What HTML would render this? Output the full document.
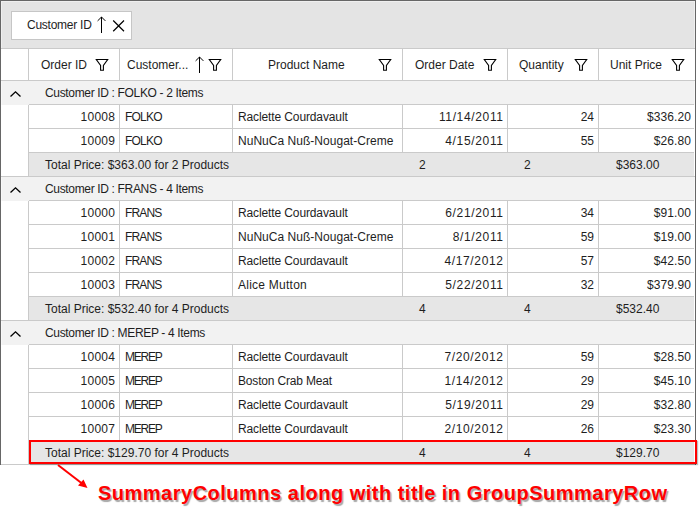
<!DOCTYPE html>
<html><head><meta charset="utf-8"><style>
html,body{margin:0;padding:0;background:#fff;width:699px;height:511px;overflow:hidden;position:relative}
body>div,body>svg{position:absolute}
.t{font-family:"Liberation Sans",sans-serif;font-size:12px;line-height:24px;color:#1e1e1e;white-space:pre}
</style></head><body>
<div style="left:0px;top:0px;width:696px;height:465px;background:#ffffff;border-left:1px solid #666666;border-top:1px solid #666666;border-right:1px solid #666666;box-sizing:border-box;"></div>
<div style="left:1px;top:1px;width:694px;height:47px;background:#efefef;"></div>
<div style="left:2px;top:2px;width:692px;height:46px;background:#e4e4e4;"></div>
<div style="left:1px;top:48px;width:694px;height:1px;background:#cacaca;"></div>
<div style="left:11px;top:11px;width:121px;height:29px;background:#fff;border:1px solid #c6c6c6;box-sizing:border-box;"></div>
<div class="t" style="left:27px;top:12px;letter-spacing:-0.25px;line-height:26px;">Customer ID</div>
<div style="left:28px;top:49px;width:1px;height:31px;background:#cacaca;"></div>
<div style="left:119px;top:49px;width:1px;height:31px;background:#cacaca;"></div>
<div style="left:232px;top:49px;width:1px;height:31px;background:#cacaca;"></div>
<div style="left:402px;top:49px;width:1px;height:31px;background:#cacaca;"></div>
<div style="left:507px;top:49px;width:1px;height:31px;background:#cacaca;"></div>
<div style="left:598px;top:49px;width:1px;height:31px;background:#cacaca;"></div>
<div style="left:1px;top:80px;width:694px;height:1px;background:#cacaca;"></div>
<div class="t" style="left:41px;top:52px;line-height:26px;">Order ID</div>
<div class="t" style="left:127px;top:52px;line-height:26px;">Customer...</div>
<div class="t" style="left:268px;top:52px;line-height:26px;">Product Name</div>
<div class="t" style="left:415px;top:52px;line-height:26px;">Order Date</div>
<div class="t" style="left:519px;top:52px;line-height:26px;">Quantity</div>
<div class="t" style="left:610px;top:52px;line-height:26px;">Unit Price</div>
<div style="left:1px;top:81px;width:694px;height:24px;background:#f8f8f8;"></div>
<div style="left:2px;top:81px;width:692px;height:24px;background:#f2f2f2;"></div>
<div style="left:29px;top:104px;width:665px;height:1px;background:#cacaca;"></div>
<div class="t" style="left:45px;top:81px;letter-spacing:-0.34px;">Customer ID : FOLKO - 2 Items</div>
<svg style="left:8px;top:89px" width="16" height="10"><path d="M2.5 7.4 L7.5 2.8 L12.5 7.4" fill="none" stroke="#000000" stroke-width="1.35"/></svg>
<div style="left:28px;top:105px;width:1px;height:24px;background:#cacaca;"></div>
<div style="left:119px;top:105px;width:1px;height:24px;background:#cacaca;"></div>
<div style="left:232px;top:105px;width:1px;height:24px;background:#cacaca;"></div>
<div style="left:402px;top:105px;width:1px;height:24px;background:#cacaca;"></div>
<div style="left:507px;top:105px;width:1px;height:24px;background:#cacaca;"></div>
<div style="left:598px;top:105px;width:1px;height:24px;background:#cacaca;"></div>
<div style="left:29px;top:128px;width:665px;height:1px;background:#cacaca;"></div>
<div class="t" style="right:583.70px;top:105px;text-align:right;letter-spacing:0.3px;">10008</div>
<div class="t" style="left:125px;top:105px;letter-spacing:-0.8px;">FOLKO</div>
<div class="t" style="left:238px;top:105px;letter-spacing:-0.12px;">Raclette Courdavault</div>
<div class="t" style="right:195.35px;top:105px;text-align:right;letter-spacing:0.65px;">11/14/2011</div>
<div class="t" style="right:105.00px;top:105px;text-align:right;">24</div>
<div class="t" style="right:7.88px;top:105px;text-align:right;letter-spacing:0.12px;">$336.20</div>
<div style="left:28px;top:129px;width:1px;height:24px;background:#cacaca;"></div>
<div style="left:119px;top:129px;width:1px;height:24px;background:#cacaca;"></div>
<div style="left:232px;top:129px;width:1px;height:24px;background:#cacaca;"></div>
<div style="left:402px;top:129px;width:1px;height:24px;background:#cacaca;"></div>
<div style="left:507px;top:129px;width:1px;height:24px;background:#cacaca;"></div>
<div style="left:598px;top:129px;width:1px;height:24px;background:#cacaca;"></div>
<div style="left:29px;top:152px;width:665px;height:1px;background:#cacaca;"></div>
<div class="t" style="right:583.70px;top:129px;text-align:right;letter-spacing:0.3px;">10009</div>
<div class="t" style="left:125px;top:129px;letter-spacing:-0.8px;">FOLKO</div>
<div class="t" style="left:238px;top:129px;letter-spacing:0.03px;">NuNuCa Nuß-Nougat-Creme</div>
<div class="t" style="right:195.35px;top:129px;text-align:right;letter-spacing:0.65px;">4/15/2011</div>
<div class="t" style="right:105.00px;top:129px;text-align:right;">55</div>
<div class="t" style="right:7.88px;top:129px;text-align:right;letter-spacing:0.12px;">$26.80</div>
<div style="left:28px;top:153px;width:1px;height:24px;background:#cacaca;"></div>
<div style="left:29px;top:153px;width:665px;height:23px;background:#e6e6e6;"></div>
<div style="left:1px;top:176px;width:694px;height:1px;background:#cacaca;"></div>
<div class="t" style="left:45px;top:153px;">Total Price: $363.00 for 2 Products</div>
<div class="t" style="left:419px;top:153px;">2</div>
<div class="t" style="left:524px;top:153px;">2</div>
<div class="t" style="left:616px;top:153px;">$363.00</div>
<div style="left:1px;top:177px;width:694px;height:24px;background:#f8f8f8;"></div>
<div style="left:2px;top:177px;width:692px;height:24px;background:#f2f2f2;"></div>
<div style="left:29px;top:200px;width:665px;height:1px;background:#cacaca;"></div>
<div class="t" style="left:45px;top:177px;letter-spacing:-0.34px;">Customer ID : FRANS - 4 Items</div>
<svg style="left:8px;top:185px" width="16" height="10"><path d="M2.5 7.4 L7.5 2.8 L12.5 7.4" fill="none" stroke="#000000" stroke-width="1.35"/></svg>
<div style="left:28px;top:201px;width:1px;height:24px;background:#cacaca;"></div>
<div style="left:119px;top:201px;width:1px;height:24px;background:#cacaca;"></div>
<div style="left:232px;top:201px;width:1px;height:24px;background:#cacaca;"></div>
<div style="left:402px;top:201px;width:1px;height:24px;background:#cacaca;"></div>
<div style="left:507px;top:201px;width:1px;height:24px;background:#cacaca;"></div>
<div style="left:598px;top:201px;width:1px;height:24px;background:#cacaca;"></div>
<div style="left:29px;top:224px;width:665px;height:1px;background:#cacaca;"></div>
<div class="t" style="right:583.70px;top:201px;text-align:right;letter-spacing:0.3px;">10000</div>
<div class="t" style="left:125px;top:201px;letter-spacing:-0.87px;">FRANS</div>
<div class="t" style="left:238px;top:201px;letter-spacing:-0.12px;">Raclette Courdavault</div>
<div class="t" style="right:195.35px;top:201px;text-align:right;letter-spacing:0.65px;">6/21/2011</div>
<div class="t" style="right:105.00px;top:201px;text-align:right;">34</div>
<div class="t" style="right:7.88px;top:201px;text-align:right;letter-spacing:0.12px;">$91.00</div>
<div style="left:28px;top:225px;width:1px;height:24px;background:#cacaca;"></div>
<div style="left:119px;top:225px;width:1px;height:24px;background:#cacaca;"></div>
<div style="left:232px;top:225px;width:1px;height:24px;background:#cacaca;"></div>
<div style="left:402px;top:225px;width:1px;height:24px;background:#cacaca;"></div>
<div style="left:507px;top:225px;width:1px;height:24px;background:#cacaca;"></div>
<div style="left:598px;top:225px;width:1px;height:24px;background:#cacaca;"></div>
<div style="left:29px;top:248px;width:665px;height:1px;background:#cacaca;"></div>
<div class="t" style="right:583.70px;top:225px;text-align:right;letter-spacing:0.3px;">10001</div>
<div class="t" style="left:125px;top:225px;letter-spacing:-0.87px;">FRANS</div>
<div class="t" style="left:238px;top:225px;letter-spacing:0.03px;">NuNuCa Nuß-Nougat-Creme</div>
<div class="t" style="right:195.35px;top:225px;text-align:right;letter-spacing:0.65px;">8/1/2011</div>
<div class="t" style="right:105.00px;top:225px;text-align:right;">59</div>
<div class="t" style="right:7.88px;top:225px;text-align:right;letter-spacing:0.12px;">$19.00</div>
<div style="left:28px;top:249px;width:1px;height:24px;background:#cacaca;"></div>
<div style="left:119px;top:249px;width:1px;height:24px;background:#cacaca;"></div>
<div style="left:232px;top:249px;width:1px;height:24px;background:#cacaca;"></div>
<div style="left:402px;top:249px;width:1px;height:24px;background:#cacaca;"></div>
<div style="left:507px;top:249px;width:1px;height:24px;background:#cacaca;"></div>
<div style="left:598px;top:249px;width:1px;height:24px;background:#cacaca;"></div>
<div style="left:29px;top:272px;width:665px;height:1px;background:#cacaca;"></div>
<div class="t" style="right:583.70px;top:249px;text-align:right;letter-spacing:0.3px;">10002</div>
<div class="t" style="left:125px;top:249px;letter-spacing:-0.87px;">FRANS</div>
<div class="t" style="left:238px;top:249px;letter-spacing:-0.12px;">Raclette Courdavault</div>
<div class="t" style="right:195.35px;top:249px;text-align:right;letter-spacing:0.65px;">4/17/2012</div>
<div class="t" style="right:105.00px;top:249px;text-align:right;">57</div>
<div class="t" style="right:7.88px;top:249px;text-align:right;letter-spacing:0.12px;">$42.50</div>
<div style="left:28px;top:273px;width:1px;height:24px;background:#cacaca;"></div>
<div style="left:119px;top:273px;width:1px;height:24px;background:#cacaca;"></div>
<div style="left:232px;top:273px;width:1px;height:24px;background:#cacaca;"></div>
<div style="left:402px;top:273px;width:1px;height:24px;background:#cacaca;"></div>
<div style="left:507px;top:273px;width:1px;height:24px;background:#cacaca;"></div>
<div style="left:598px;top:273px;width:1px;height:24px;background:#cacaca;"></div>
<div style="left:29px;top:296px;width:665px;height:1px;background:#cacaca;"></div>
<div class="t" style="right:583.70px;top:273px;text-align:right;letter-spacing:0.3px;">10003</div>
<div class="t" style="left:125px;top:273px;letter-spacing:-0.87px;">FRANS</div>
<div class="t" style="left:238px;top:273px;letter-spacing:0.25px;">Alice Mutton</div>
<div class="t" style="right:195.35px;top:273px;text-align:right;letter-spacing:0.65px;">5/22/2011</div>
<div class="t" style="right:105.00px;top:273px;text-align:right;">32</div>
<div class="t" style="right:7.88px;top:273px;text-align:right;letter-spacing:0.12px;">$379.90</div>
<div style="left:28px;top:297px;width:1px;height:24px;background:#cacaca;"></div>
<div style="left:29px;top:297px;width:665px;height:23px;background:#e6e6e6;"></div>
<div style="left:1px;top:320px;width:694px;height:1px;background:#cacaca;"></div>
<div class="t" style="left:45px;top:297px;">Total Price: $532.40 for 4 Products</div>
<div class="t" style="left:419px;top:297px;">4</div>
<div class="t" style="left:524px;top:297px;">4</div>
<div class="t" style="left:616px;top:297px;">$532.40</div>
<div style="left:1px;top:321px;width:694px;height:24px;background:#f8f8f8;"></div>
<div style="left:2px;top:321px;width:692px;height:24px;background:#f2f2f2;"></div>
<div style="left:29px;top:344px;width:665px;height:1px;background:#cacaca;"></div>
<div class="t" style="left:45px;top:321px;letter-spacing:-0.34px;">Customer ID : MEREP - 4 Items</div>
<svg style="left:8px;top:329px" width="16" height="10"><path d="M2.5 7.4 L7.5 2.8 L12.5 7.4" fill="none" stroke="#000000" stroke-width="1.35"/></svg>
<div style="left:28px;top:345px;width:1px;height:24px;background:#cacaca;"></div>
<div style="left:119px;top:345px;width:1px;height:24px;background:#cacaca;"></div>
<div style="left:232px;top:345px;width:1px;height:24px;background:#cacaca;"></div>
<div style="left:402px;top:345px;width:1px;height:24px;background:#cacaca;"></div>
<div style="left:507px;top:345px;width:1px;height:24px;background:#cacaca;"></div>
<div style="left:598px;top:345px;width:1px;height:24px;background:#cacaca;"></div>
<div style="left:29px;top:368px;width:665px;height:1px;background:#cacaca;"></div>
<div class="t" style="right:583.70px;top:345px;text-align:right;letter-spacing:0.3px;">10004</div>
<div class="t" style="left:125px;top:345px;letter-spacing:-1.25px;">MEREP</div>
<div class="t" style="left:238px;top:345px;letter-spacing:-0.12px;">Raclette Courdavault</div>
<div class="t" style="right:195.35px;top:345px;text-align:right;letter-spacing:0.65px;">7/20/2012</div>
<div class="t" style="right:105.00px;top:345px;text-align:right;">59</div>
<div class="t" style="right:7.88px;top:345px;text-align:right;letter-spacing:0.12px;">$28.50</div>
<div style="left:28px;top:369px;width:1px;height:24px;background:#cacaca;"></div>
<div style="left:119px;top:369px;width:1px;height:24px;background:#cacaca;"></div>
<div style="left:232px;top:369px;width:1px;height:24px;background:#cacaca;"></div>
<div style="left:402px;top:369px;width:1px;height:24px;background:#cacaca;"></div>
<div style="left:507px;top:369px;width:1px;height:24px;background:#cacaca;"></div>
<div style="left:598px;top:369px;width:1px;height:24px;background:#cacaca;"></div>
<div style="left:29px;top:392px;width:665px;height:1px;background:#cacaca;"></div>
<div class="t" style="right:583.70px;top:369px;text-align:right;letter-spacing:0.3px;">10005</div>
<div class="t" style="left:125px;top:369px;letter-spacing:-1.25px;">MEREP</div>
<div class="t" style="left:238px;top:369px;letter-spacing:-0.17px;">Boston Crab Meat</div>
<div class="t" style="right:195.35px;top:369px;text-align:right;letter-spacing:0.65px;">1/14/2012</div>
<div class="t" style="right:105.00px;top:369px;text-align:right;">29</div>
<div class="t" style="right:7.88px;top:369px;text-align:right;letter-spacing:0.12px;">$45.10</div>
<div style="left:28px;top:393px;width:1px;height:24px;background:#cacaca;"></div>
<div style="left:119px;top:393px;width:1px;height:24px;background:#cacaca;"></div>
<div style="left:232px;top:393px;width:1px;height:24px;background:#cacaca;"></div>
<div style="left:402px;top:393px;width:1px;height:24px;background:#cacaca;"></div>
<div style="left:507px;top:393px;width:1px;height:24px;background:#cacaca;"></div>
<div style="left:598px;top:393px;width:1px;height:24px;background:#cacaca;"></div>
<div style="left:29px;top:416px;width:665px;height:1px;background:#cacaca;"></div>
<div class="t" style="right:583.70px;top:393px;text-align:right;letter-spacing:0.3px;">10006</div>
<div class="t" style="left:125px;top:393px;letter-spacing:-1.25px;">MEREP</div>
<div class="t" style="left:238px;top:393px;letter-spacing:-0.12px;">Raclette Courdavault</div>
<div class="t" style="right:195.35px;top:393px;text-align:right;letter-spacing:0.65px;">5/19/2011</div>
<div class="t" style="right:105.00px;top:393px;text-align:right;">29</div>
<div class="t" style="right:7.88px;top:393px;text-align:right;letter-spacing:0.12px;">$32.80</div>
<div style="left:28px;top:417px;width:1px;height:24px;background:#cacaca;"></div>
<div style="left:119px;top:417px;width:1px;height:24px;background:#cacaca;"></div>
<div style="left:232px;top:417px;width:1px;height:24px;background:#cacaca;"></div>
<div style="left:402px;top:417px;width:1px;height:24px;background:#cacaca;"></div>
<div style="left:507px;top:417px;width:1px;height:24px;background:#cacaca;"></div>
<div style="left:598px;top:417px;width:1px;height:24px;background:#cacaca;"></div>
<div style="left:29px;top:440px;width:665px;height:1px;background:#cacaca;"></div>
<div class="t" style="right:583.70px;top:417px;text-align:right;letter-spacing:0.3px;">10007</div>
<div class="t" style="left:125px;top:417px;letter-spacing:-1.25px;">MEREP</div>
<div class="t" style="left:238px;top:417px;letter-spacing:-0.12px;">Raclette Courdavault</div>
<div class="t" style="right:195.35px;top:417px;text-align:right;letter-spacing:0.65px;">2/10/2012</div>
<div class="t" style="right:105.00px;top:417px;text-align:right;">26</div>
<div class="t" style="right:7.88px;top:417px;text-align:right;letter-spacing:0.12px;">$23.30</div>
<div style="left:28px;top:441px;width:1px;height:24px;background:#cacaca;"></div>
<div style="left:29px;top:441px;width:665px;height:23px;background:#e6e6e6;"></div>
<div style="left:1px;top:464px;width:694px;height:1px;background:#cacaca;"></div>
<div class="t" style="left:45px;top:441px;">Total Price: $129.70 for 4 Products</div>
<div class="t" style="left:419px;top:441px;">4</div>
<div class="t" style="left:524px;top:441px;">4</div>
<div class="t" style="left:616px;top:441px;">$129.70</div>
<div style="left:29px;top:440px;width:668px;height:24px;background:transparent;border:2px solid #ff0000;box-sizing:border-box;box-shadow:1px 1px 1px rgba(0,0,0,0.25);"></div>
<svg style="left:50px;top:460px" width="50" height="35"><line x1="8" y1="5" x2="34" y2="25" stroke="#f00" stroke-width="2"/><path d="M37.5 28 L28 25.5 L33.5 19.5 Z" fill="#f00"/></svg>
<div class="t" style="left:98px;top:480px;font-size:20px;letter-spacing:0.5px;font-weight:bold;color:#ff0000;line-height:26px;text-shadow:1.5px 1.5px 1px rgba(0,0,0,0.35);">SummaryColumns along with title in GroupSummaryRow</div>
<svg style="left:95px;top:58px" width="15" height="15"><path d="M1.3 1.5 L12.7 1.5 L8.4 7.4 L8.4 12.3 L5.6 12.3 L5.6 7.4 Z" fill="none" stroke="#000000" stroke-width="1.1"/></svg>
<svg style="left:208px;top:58px" width="15" height="15"><path d="M1.3 1.5 L12.7 1.5 L8.4 7.4 L8.4 12.3 L5.6 12.3 L5.6 7.4 Z" fill="none" stroke="#000000" stroke-width="1.1"/></svg>
<svg style="left:378px;top:58px" width="15" height="15"><path d="M1.3 1.5 L12.7 1.5 L8.4 7.4 L8.4 12.3 L5.6 12.3 L5.6 7.4 Z" fill="none" stroke="#000000" stroke-width="1.1"/></svg>
<svg style="left:483px;top:58px" width="15" height="15"><path d="M1.3 1.5 L12.7 1.5 L8.4 7.4 L8.4 12.3 L5.6 12.3 L5.6 7.4 Z" fill="none" stroke="#000000" stroke-width="1.1"/></svg>
<svg style="left:574px;top:58px" width="15" height="15"><path d="M1.3 1.5 L12.7 1.5 L8.4 7.4 L8.4 12.3 L5.6 12.3 L5.6 7.4 Z" fill="none" stroke="#000000" stroke-width="1.1"/></svg>
<svg style="left:671px;top:58px" width="15" height="15"><path d="M1.3 1.5 L12.7 1.5 L8.4 7.4 L8.4 12.3 L5.6 12.3 L5.6 7.4 Z" fill="none" stroke="#000000" stroke-width="1.1"/></svg>
<svg style="left:193px;top:56px" width="12" height="18"><path d="M6.5 1 L6.5 17" stroke="#000000" stroke-width="1"/><path d="M2.6 4.9 L6.5 1 L10.4 4.9" fill="none" stroke="#000000" stroke-width="1"/></svg>
<svg style="left:95px;top:16px" width="12" height="18"><path d="M6.5 1 L6.5 17" stroke="#000000" stroke-width="1"/><path d="M2.6 4.9 L6.5 1 L10.4 4.9" fill="none" stroke="#000000" stroke-width="1"/></svg>
<svg style="left:112px;top:19px" width="14" height="14"><path d="M1.2 1.5 L12 12.2 M12 1.5 L1.2 12.2" stroke="#000000" stroke-width="1.2"/></svg>
</body></html>
